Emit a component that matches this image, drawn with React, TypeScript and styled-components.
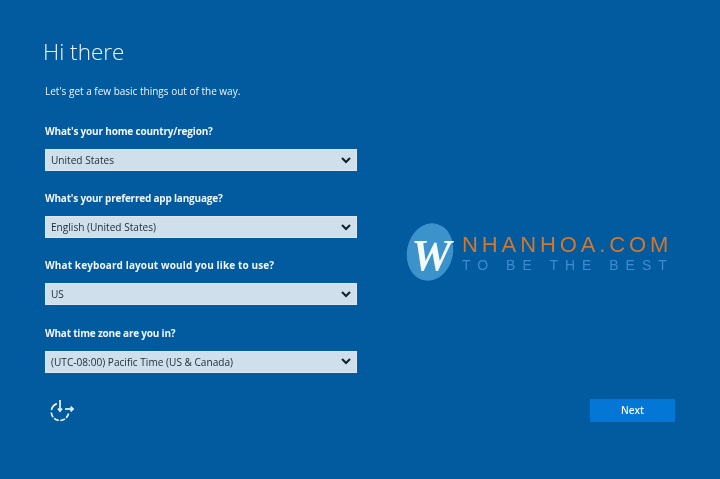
import React from 'react';
import styled, { createGlobalStyle } from 'styled-components';

const GlobalStyle = createGlobalStyle`
  html, body {
    margin: 0;
    padding: 0;
    background: #025a9f;
  }
`;

const Page = styled.div`
  width: 720px;
  height: 479px;
  box-sizing: border-box;
  padding: 37px 45px 0 45px;
  display: flex;
  flex-direction: column;
  overflow: hidden;
  background: #025a9f;
  color: #eef5fb;
  font-family: "Open Sans", "Noto Sans", sans-serif;
  filter: blur(0.35px);
`;

const Main = styled.div`
  display: flex;
  height: 350px;
`;

const FormColumn = styled.div`
  width: 312px;
  flex-shrink: 0;
  display: flex;
  flex-direction: column;
`;

const Title = styled.h1`
  margin: 1px 0 0 -2px;
  font-size: 22.5px;
  line-height: 28px;
  font-weight: 300;
`;

const Intro = styled.p`
  margin: 18px 0 25px;
  font-size: 10px;
  line-height: 14px;
  font-weight: 400;
`;

const Fields = styled.div`
  display: flex;
  flex-direction: column;
  gap: 19.2px;
`;

const Field = styled.div`
  display: flex;
  flex-direction: column;
  gap: 10px;
`;

const Label = styled.label<{ $tracking: number }>`
  font-size: 10px;
  line-height: 16px;
  font-weight: 700;
  letter-spacing: ${(p) => p.$tracking}px;
  color: #f0f6fb;
`;

const SelectBox = styled.div`
  height: 22px;
  box-sizing: border-box;
  padding: 0 5px;
  display: flex;
  align-items: center;
  justify-content: space-between;
  background: #cfdfec;
  border: 1px solid #dbe8f3;
  color: #1d2a36;
  font-size: 10.1px;
`;

const Chevron = styled.svg`
  width: 10px;
  height: 7px;
  fill: none;
  stroke: #10202e;
  stroke-width: 2;
`;

const Brand = styled.div`
  margin: 185px 0 0 50px;
  display: flex;
  align-items: center;
  height: 60px;
`;

const BrandMark = styled.div`
  width: 46px;
  height: 58px;
  border-radius: 50%;
  background: #3c93cb;
  transform: rotate(12deg);
  display: flex;
  align-items: center;
  justify-content: center;
  flex-shrink: 0;
`;

const BrandLetter = styled.span`
  display: block;
  transform: rotate(-12deg);
  margin: 6px 0 0 4px;
  font-family: "Liberation Serif", serif;
  font-style: italic;
  font-weight: 700;
  font-size: 45px;
  line-height: 1;
  color: #f4f9fc;
`;

const BrandText = styled.div`
  margin: 2px 0 0 9px;
  display: flex;
  flex-direction: column;
  gap: 2px;
`;

const BrandName = styled.span`
  font-family: "Liberation Sans", sans-serif;
  font-size: 22px;
  line-height: 22px;
  letter-spacing: 3.9px;
  color: #d4762b;
  white-space: nowrap;
`;

const BrandSlogan = styled.span`
  font-family: "Liberation Sans", sans-serif;
  font-size: 14px;
  line-height: 14px;
  letter-spacing: 7px;
  color: #3f8ccc;
  white-space: nowrap;
`;

const Footer = styled.div`
  margin-top: 9px;
  display: flex;
  align-items: center;
  justify-content: space-between;
`;

const AccessIcon = styled.svg`
  width: 28px;
  height: 28px;
  margin-left: 1px;
  fill: none;
  stroke: #eef5fb;
  stroke-width: 1.7;
`;

const NextButton = styled.button`
  width: 85px;
  height: 23px;
  border: none;
  padding: 0;
  background: #0477d6;
  color: #eef6fc;
  font-family: inherit;
  font-size: 10px;
  font-weight: 600;
`;

const fields = [
  { label: "What's your home country/region?", value: 'United States', tracking: -0.18 },
  { label: "What's your preferred app language?", value: 'English (United States)', tracking: -0.2 },
  { label: 'What keyboard layout would you like to use?', value: 'US', tracking: 0.12 },
  { label: 'What time zone are you in?', value: '(UTC-08:00) Pacific Time (US & Canada)', tracking: -0.2 },
];

export default function App() {
  return (
    <Page>
      <GlobalStyle />
      <Main>
        <FormColumn>
          <Title>Hi there</Title>
          <Intro>Let's get a few basic things out of the way.</Intro>
          <Fields>
            {fields.map((field) => (
              <Field key={field.label}>
                <Label $tracking={field.tracking}>{field.label}</Label>
                <SelectBox>
                  <span>{field.value}</span>
                  <Chevron viewBox="0 0 10 7">
                    <path d="M1 1 L5 5 L9 1" />
                  </Chevron>
                </SelectBox>
              </Field>
            ))}
          </Fields>
        </FormColumn>
        <Brand>
          <BrandMark>
            <BrandLetter>W</BrandLetter>
          </BrandMark>
          <BrandText>
            <BrandName>NHANHOA.COM</BrandName>
            <BrandSlogan>TO BE THE BEST</BrandSlogan>
          </BrandText>
        </Brand>
      </Main>
      <Footer>
        <AccessIcon viewBox="0 0 28 28">
          <path d="M10.8 7.6 A8.7 8.7 0 0 0 5.4 14" />
          <path d="M5.3 16.5 A8.7 8.7 0 0 0 22.5 17.5" strokeDasharray="5 1.6" />
          <path d="M14 4 V15" />
          <path d="M12 12.6 L14 15.2 L16 12.6" />
          <path d="M19 13 H27" />
          <path d="M24.6 10.6 L27 13 L24.6 15.4" />
        </AccessIcon>
        <NextButton>Next</NextButton>
      </Footer>
    </Page>
  );
}
